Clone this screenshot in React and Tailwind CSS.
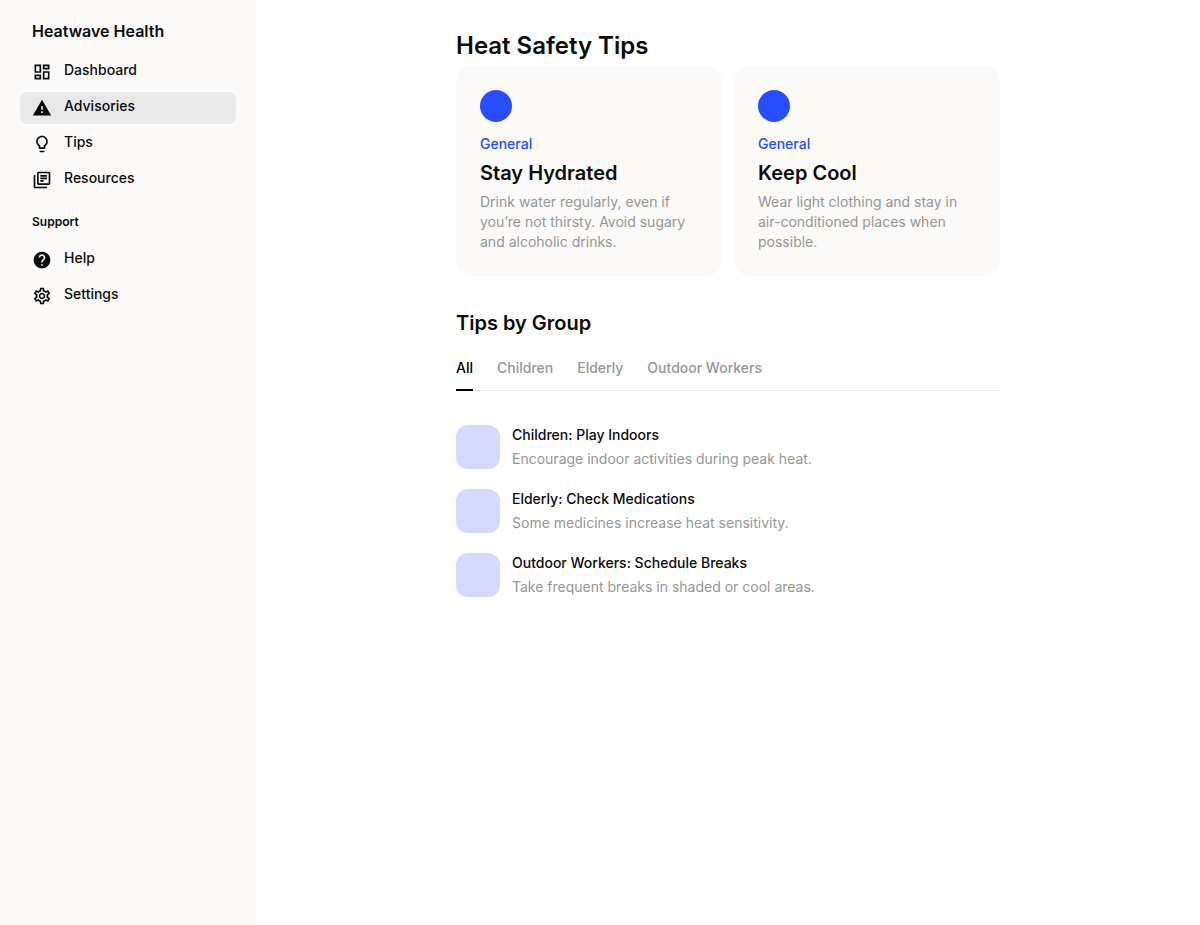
import { useState } from "react";
import {
  MdHelp,
  MdLightbulbOutline,
  MdOutlineDashboard,
  MdOutlineLibraryBooks,
  MdOutlineSettings,
  MdWarning,
} from "react-icons/md";

const mainLinks = [
  { label: "Dashboard", icon: MdOutlineDashboard },
  { label: "Advisories", icon: MdWarning, current: true },
  { label: "Tips", icon: MdLightbulbOutline },
  { label: "Resources", icon: MdOutlineLibraryBooks },
];

const supportLinks = [
  { label: "Help", icon: MdHelp },
  { label: "Settings", icon: MdOutlineSettings },
];

const cards = [
  {
    title: "Stay Hydrated",
    text: "Drink water regularly, even if you’re not thirsty. Avoid sugary and alcoholic drinks.",
  },
  {
    title: "Keep Cool",
    text: "Wear light clothing and stay in air-conditioned places when possible.",
  },
];

const groups = ["All", "Children", "Elderly", "Outdoor Workers"];

const tips = [
  { group: "Children", title: "Play Indoors", text: "Encourage indoor activities during peak heat." },
  { group: "Elderly", title: "Check Medications", text: "Some medicines increase heat sensitivity." },
  { group: "Outdoor Workers", title: "Schedule Breaks", text: "Take frequent breaks in shaded or cool areas." },
];

function NavList({ links }) {
  return (
    <ul className="flex flex-col gap-1">
      {links.map(({ label, icon: Icon, current }) => (
        <li key={label}>
          <a
            href="#"
            aria-current={current ? "page" : undefined}
            className={`flex gap-3 rounded-lg px-3 pt-1 text-sm font-medium ${current ? "bg-[#e8e8e8]" : ""}`}
          >
            <Icon className="mt-0.5 mb-1.5 size-5 shrink-0" aria-hidden="true" />
            <span className="leading-5">{label}</span>
          </a>
        </li>
      ))}
    </ul>
  );
}

export default function App() {
  const [active, setActive] = useState("All");
  const shown = tips.filter((tip) => active === "All" || tip.group === active);

  return (
    <div className="flex min-h-screen bg-white font-['Inter',sans-serif] text-[#0b0b0b]">
      <aside className="w-64 shrink-0 bg-[#fbfaf8] px-5 py-5">
        <p className="px-3 pb-3.5 text-base leading-[22px] font-semibold">Heatwave Health</p>
        <nav aria-label="Main">
          <NavList links={mainLinks} />
        </nav>
        <h2 className="px-3 pt-4 pb-3 text-xs leading-5 font-semibold">Support</h2>
        <nav aria-label="Support">
          <NavList links={supportLinks} />
        </nav>
      </aside>

      <main className="min-w-0 flex-1 px-12 py-7">
        <div className="mx-auto max-w-[544px]">
          <h1 className="pt-0.5 pb-1 text-2xl leading-8 font-semibold">Heat Safety Tips</h1>
          <div className="grid grid-cols-2 gap-3">
            {cards.map((card) => (
              <article key={card.title} className="rounded-2xl bg-[#fbfaf8] p-6">
                <div className="size-8 rounded-full bg-[#274dff]" />
                <p className="mt-3 text-sm leading-5 font-medium text-[#274dff]">General</p>
                <h2 className="mt-1 text-xl leading-[30px] font-semibold">{card.title}</h2>
                <p className="mt-1 text-sm leading-5 text-[#969696]">{card.text}</p>
              </article>
            ))}
          </div>

          <h2 className="mt-8 text-xl leading-[30px] font-semibold">Tips by Group</h2>
          <div role="tablist" aria-label="Tips by group" className="mt-5 flex gap-6 border-b border-[#ebebeb]">
            {groups.map((group) => (
              <button
                key={group}
                type="button"
                role="tab"
                aria-selected={active === group}
                onClick={() => setActive(group)}
                className={`-mb-px border-b-2 pb-[11px] text-sm leading-5 font-medium ${
                  active === group ? "border-black text-black" : "border-transparent text-[#969696]"
                }`}
              >
                {group}
              </button>
            ))}
          </div>

          <ul className="mt-[34px] flex flex-col gap-5">
            {shown.map((tip) => (
              <li key={tip.title} className="flex items-center gap-3">
                <div className="size-11 shrink-0 rounded-xl bg-[#d4daff]" />
                <div className="flex flex-col gap-1">
                  <h3 className="text-sm leading-5 font-medium">
                    {tip.group}: {tip.title}
                  </h3>
                  <p className="text-sm leading-5 text-[#969696]">{tip.text}</p>
                </div>
              </li>
            ))}
          </ul>
        </div>
      </main>
    </div>
  );
}
